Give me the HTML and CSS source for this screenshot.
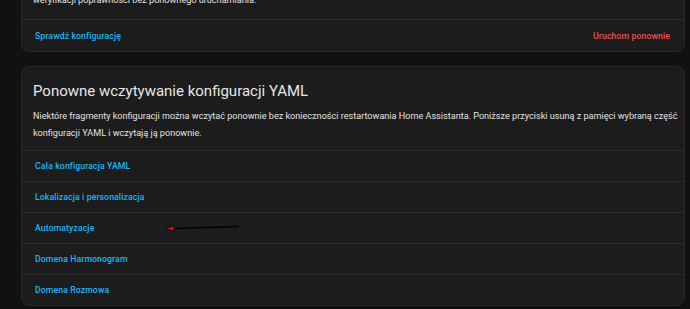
FILE: index.html
```html
<!DOCTYPE html>
<html lang="pl">
<head>
<meta charset="utf-8">
<link rel="stylesheet" href="styles.css">
</head>
<body>
<div class="page">
  <section class="card card-top">
    <p class="card-text">weryfikacji poprawności bez ponownego uruchamiania.</p>
    <div class="actions">
      <span class="btn btn-primary">Sprawdź konfigurację</span>
      <span class="btn btn-danger">Uruchom ponownie</span>
    </div>
  </section>

  <section class="card">
    <h1 class="card-title">Ponowne wczytywanie konfiguracji YAML</h1>
    <p class="card-desc">Niektóre fragmenty konfiguracji można wczytać ponownie bez konieczności restartowania Home Assistanta. Poniższe przyciski usuną z pamięci wybraną część konfiguracji YAML i wczytają ją ponownie.</p>
    <ul class="rows">
      <li class="row"><span class="btn btn-primary">Cała konfiguracja YAML</span></li>
      <li class="row"><span class="btn btn-primary">Lokalizacja i personalizacja</span></li>
      <li class="row row-annotated"><span class="btn btn-primary">Automatyzacje</span>
        <svg class="arrow" width="76" height="8" viewBox="0 0 76 8">
          <line x1="8" y1="4.5" x2="74" y2="2.5" stroke="#000" stroke-width="1.3"/>
          <path d="M1 4.6 L9 1.6 L9 7.2 Z" fill="#e01010" stroke="#000" stroke-width="0.8"/>
        </svg>
      </li>
      <li class="row"><span class="btn btn-primary">Domena Harmonogram</span></li>
      <li class="row"><span class="btn btn-primary">Domena Rozmowa</span></li>
    </ul>
  </section>
</div>
</body>
</html>
```

FILE: styles.css
```css
* { box-sizing: border-box; }
html, body {
  margin: 0;
  padding: 0;
  background: #111111;
  height: 100%;
  overflow: hidden;
}
body {
  font-family: Roboto, "Noto Sans", "Liberation Sans", sans-serif;
  color: #e1e1e1;
}
.page {
  display: flex;
  flex-direction: column;
  gap: 14px;
  padding-left: 21px;
  width: 685px;
}
.card {
  background: #1c1c1c;
  border: 1px solid #282828;
  border-radius: 8px;
}
.card-top {
  margin-top: -39px;
  padding-top: 30px;
}
.card-text {
  margin: 0;
  padding: 0 11px 10px;
  font-size: 9.1px;
  line-height: 17px;
}
.actions {
  display: flex;
  justify-content: space-between;
  align-items: center;
  height: 32px;
  border-top: 1px solid #2c2c2c;
  padding: 0 14px 0 13px;
}
.btn {
  font-size: 8.7px;
  font-weight: 500;
  letter-spacing: 0.1px;
}
.btn-primary { color: #1fb3f7; }
.btn-danger { color: #ec4f52; }
.card-title {
  margin: 0;
  padding: 12px 11px 0;
  font-size: 15px;
  font-weight: 400;
  line-height: 24px;
  color: #e6e6e6;
}
.card-desc {
  margin: 0;
  padding: 5px 0 8px 11px;
  font-size: 9.1px;
  line-height: 17px;
}
.rows {
  list-style: none;
  margin: 0;
  padding: 0;
}
.row {
  position: relative;
  display: flex;
  align-items: center;
  height: 31px;
  border-top: 1px solid #2c2c2c;
  padding-left: 13px;
}
.arrow {
  position: absolute;
  left: 143px;
  top: 11px;
}
```
